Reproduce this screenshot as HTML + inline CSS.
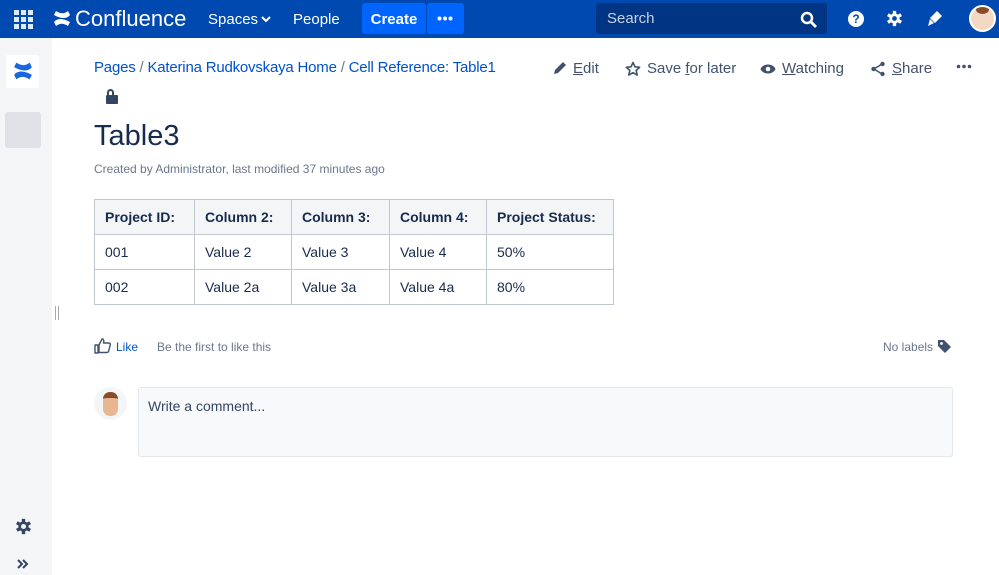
<!DOCTYPE html>
<html><head><style>
*{box-sizing:border-box;margin:0;padding:0}
body{width:999px;height:575px;overflow:hidden;font-family:"Liberation Sans",sans-serif;background:#fff;position:relative;color:#172b4d}
.hdr{position:absolute;left:0;top:0;width:999px;height:38px;background:#0049b0}
.abs{position:absolute}
.w{color:#fff}
.side{position:absolute;left:0;top:38px;width:52px;height:537px;background:#f4f5f7}
a{color:#0052cc;text-decoration:none}
table{position:absolute;left:94px;top:199px;border-collapse:collapse;font-size:14px}
td,th{border:1px solid #c1c7d0;height:35px;padding:0 10px;text-align:left}
th{background:#f4f5f7;font-weight:bold}
.act{font-size:15px;color:#42526e;top:60px;display:flex;align-items:center;gap:6px}
</style></head><body>
<div class="hdr">
 <svg class="abs" style="left:14px;top:10px" width="19" height="19" viewBox="0 0 19 19" fill="#deebff"><rect x="0" y="0" width="5" height="5"/><rect x="7" y="0" width="5" height="5"/><rect x="14" y="0" width="5" height="5"/><rect x="0" y="7" width="5" height="5"/><rect x="7" y="7" width="5" height="5"/><rect x="14" y="7" width="5" height="5"/><rect x="0" y="14" width="5" height="5"/><rect x="7" y="14" width="5" height="5"/><rect x="14" y="14" width="5" height="5"/></svg>
 <svg class="abs" style="left:53px;top:10px" width="18" height="17" viewBox="0 0 18 17" fill="#fff"><path d="M1 12c3-4 9-4 16 0l-2 4c-5-3-8-3-12 0z"/><path d="M17 5C14 9 8 9 1 5l2-4c5 3 8 3 12 0z"/></svg>
 <div class="abs w" style="left:75px;top:6px;font-size:22px">Confluence</div>
 <div class="abs w" style="left:208px;top:11px;font-size:15px">Spaces</div>
 <svg class="abs" style="left:261px;top:15px" width="10" height="8" viewBox="0 0 10 8"><path d="M1 2l4 4 4-4" stroke="#fff" stroke-width="2" fill="none"/></svg>
 <div class="abs w" style="left:293px;top:11px;font-size:15px">People</div>
 <div class="abs" style="left:362px;top:3px;width:64px;height:31px;background:#0065ff;border-radius:3px;color:#fff;font-weight:bold;font-size:15px;text-align:center;line-height:33px">Create</div>
 <div class="abs" style="left:427px;top:3px;width:37px;height:31px;background:#0065ff;border-radius:3px"></div>
 <svg class="abs" style="left:437px;top:16px" width="16" height="5"><circle cx="2.5" cy="2.5" r="2" fill="#fff"/><circle cx="8" cy="2.5" r="2" fill="#fff"/><circle cx="13.5" cy="2.5" r="2" fill="#fff"/></svg>
 <div class="abs" style="left:596px;top:3px;width:231px;height:31px;background:#003584;border-radius:3px;color:#c7d1e3;font-size:15px;line-height:32px;padding-left:11px">Search</div>
 <svg class="abs" style="left:800px;top:11px" width="17" height="17" viewBox="0 0 17 17"><circle cx="7" cy="7" r="5" stroke="#fff" stroke-width="2.5" fill="none"/><path d="M11 11l5 5" stroke="#fff" stroke-width="2.8"/></svg>
 <div class="abs" style="left:848px;top:11px;width:16px;height:16px;border-radius:50%;background:#fff;color:#0049b0;font-size:12px;font-weight:bold;text-align:center;line-height:16px">?</div>
 <svg class="abs" style="left:886px;top:10px" width="17" height="17" viewBox="-10 -10 20 20"><g fill="#fff"><circle r="6"/><rect x="-2" y="-9" width="4" height="18"/><rect x="-2" y="-9" width="4" height="18" transform="rotate(60)"/><rect x="-2" y="-9" width="4" height="18" transform="rotate(120)"/></g><circle r="2.8" fill="#0049b0"/></svg>
 <svg class="abs" style="left:926px;top:10px" width="17" height="17" viewBox="0 0 17 17" fill="#fff"><path d="M11 1l5 5-7 7-5-5z"/><path d="M4 9l4 4-6 3 2-7z"/></svg>
 <div class="abs" style="left:969px;top:5px;width:27px;height:27px;border-radius:50%;background:#f3d9c4;border:2px solid #fff;overflow:hidden"><div style="position:absolute;left:5px;top:-2px;width:13px;height:9px;border-radius:50%;background:#8a4b2a"></div></div>
</div>
<div class="side">
 <div class="abs" style="left:6px;top:17px;width:33px;height:33px;background:#fff;border-radius:2px"></div>
 <svg class="abs" style="left:13px;top:23px" width="20" height="20" viewBox="0 0 18 17" fill="#1868db"><path d="M1 12c3-4 9-4 16 0l-2 4c-5-3-8-3-12 0z"/><path d="M17 5C14 9 8 9 1 5l2-4c5 3 8 3 12 0z"/></svg>
 <div class="abs" style="left:5px;top:74px;width:36px;height:36px;background:#dfe1e6;border-radius:3px"></div>
 <svg class="abs" style="left:15px;top:480px" width="17" height="17" viewBox="-10 -10 20 20"><g fill="#344563"><circle r="6"/><rect x="-2" y="-9" width="4" height="18"/><rect x="-2" y="-9" width="4" height="18" transform="rotate(60)"/><rect x="-2" y="-9" width="4" height="18" transform="rotate(120)"/></g><circle r="3" fill="#f4f5f7"/></svg>
 <svg class="abs" style="left:17px;top:521px" width="12" height="10" viewBox="0 0 12 10"><path d="M1 1l4 4-4 4M6 1l4 4-4 4" stroke="#344563" stroke-width="2" fill="none"/></svg>
</div>
<div class="abs" style="left:55px;top:306px;width:4px;height:14px;border-left:1px solid #aaa;border-right:1px solid #aaa"></div>
<div class="abs" style="left:94px;top:59px;font-size:15px;color:#0052cc;letter-spacing:-0.2px"><a>Pages</a> <span style="color:#6b778c">/</span> <a>Katerina Rudkovskaya Home</a> <span style="color:#6b778c">/</span> <a>Cell Reference: Table1</a></div>
<div class="abs" style="left:106px;top:95px;width:12px;height:9px;background:#344563;border-radius:1px"></div>
<div class="abs" style="left:107px;top:89px;width:7px;height:8px;border:2px solid #344563;border-bottom:none;border-radius:4px 4px 0 0"></div>
<div class="abs act" style="left:552px"><svg width="15" height="15" viewBox="0 0 15 15"><path d="M2 13l1-4 8-8 3 3-8 8z" fill="#42526e"/></svg><span><u>E</u>dit</span></div>
<div class="abs act" style="left:625px"><svg width="16" height="16" viewBox="0 0 16 16"><path d="M8 1.5l2 4.3 4.6.5-3.4 3.1 1 4.6L8 11.7 3.8 14l1-4.6L1.4 6.3 6 5.8z" stroke="#42526e" stroke-width="1.6" fill="none" stroke-linejoin="round"/></svg><span>Save <u>f</u>or later</span></div>
<div class="abs act" style="left:760px"><svg width="16" height="12" viewBox="0 0 16 12"><path d="M0.5 6C3 0 13 0 15.5 6 13 12 3 12 0.5 6z" fill="#42526e"/><circle cx="8" cy="6" r="2.3" fill="#fff"/></svg><span><u>W</u>atching</span></div>
<div class="abs act" style="left:870px"><svg width="16" height="16" viewBox="0 0 16 16"><path d="M12 3L4 8l8 5" stroke="#42526e" stroke-width="1.5" fill="none"/><circle cx="12.5" cy="3" r="2.2" fill="#42526e"/><circle cx="3.5" cy="8" r="2.2" fill="#42526e"/><circle cx="12.5" cy="13" r="2.2" fill="#42526e"/></svg><span><u>S</u>hare</span></div>
<svg class="abs" style="left:956px;top:64px" width="16" height="5"><circle cx="2.5" cy="2.5" r="1.8" fill="#42526e"/><circle cx="8" cy="2.5" r="1.8" fill="#42526e"/><circle cx="13.5" cy="2.5" r="1.8" fill="#42526e"/></svg>
<div class="abs" style="left:94px;top:120px;font-size:29px;color:#172b4d">Table3</div>
<div class="abs" style="left:94px;top:162px;font-size:12px;color:#6b778c">Created by Administrator, last modified 37 minutes ago</div>
<table>
<tr><th style="width:100px">Project ID:</th><th style="width:97px">Column 2:</th><th style="width:98px">Column 3:</th><th style="width:97px">Column 4:</th><th style="width:127px">Project Status:</th></tr>
<tr><td>001</td><td>Value 2</td><td>Value 3</td><td>Value 4</td><td>50%</td></tr>
<tr><td>002</td><td>Value 2a</td><td>Value 3a</td><td>Value 4a</td><td>80%</td></tr>
</table>
<svg class="abs" style="left:94px;top:338px" width="17" height="16" viewBox="0 0 17 16"><path d="M1 7h3v8H1zM5 7l3-6c2 0 2 2 1.5 4H15c1 0 1.5 1 1.2 2l-1.5 6c-.2 1-1 1.5-2 1.5H5z" stroke="#42526e" stroke-width="1.4" fill="none" stroke-linejoin="round"/></svg>
<div class="abs" style="left:116px;top:340px;font-size:12px;color:#0052cc">Like</div>
<div class="abs" style="left:157px;top:340px;font-size:12px;color:#6b778c">Be the first to like this</div>
<div class="abs" style="left:883px;top:340px;font-size:12px;color:#6b778c">No labels</div>
<svg class="abs" style="left:937px;top:339px" width="15" height="15" viewBox="0 0 15 15"><path d="M1 1h6l7 7-6 6-7-7z" fill="#42526e"/><circle cx="4.5" cy="4.5" r="1.4" fill="#fff"/></svg>
<div class="abs" style="left:94px;top:387px;width:33px;height:33px;border-radius:50%;background:#f4f5f7"></div>
<div class="abs" style="left:103px;top:392px;width:15px;height:24px;border-radius:7px;background:#e8b690;border-top:6px solid #8a4b2a"></div>
<div class="abs" style="left:138px;top:387px;width:815px;height:70px;background:#f8f9fa;border:1px solid #e4e6ea;border-radius:3px;font-size:14px;color:#344563;padding:10px 9px">Write a comment...</div>
</body></html>
